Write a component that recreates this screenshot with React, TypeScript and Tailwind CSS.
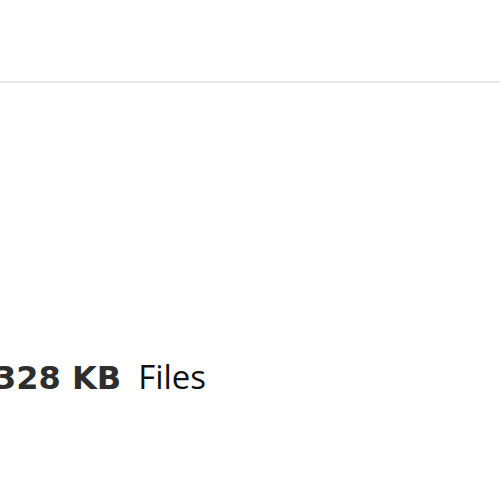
export default function App() {
  return (
    <div className="h-[500px] w-[500px] overflow-hidden bg-white">
      <div className="h-[83px] border-b-2 border-[#e9e9e9]" />
      <div className="-ml-[6px] whitespace-nowrap pt-[276px] font-['DejaVu_Sans',sans-serif] text-[32px] leading-[36px]">
        <span className="font-bold text-[#2e2e2e]">328 KB</span>
        <span className="ml-[17px] font-['Open_Sans',sans-serif] text-[33px] text-[#111]">Files</span>
      </div>
    </div>
  );
}
